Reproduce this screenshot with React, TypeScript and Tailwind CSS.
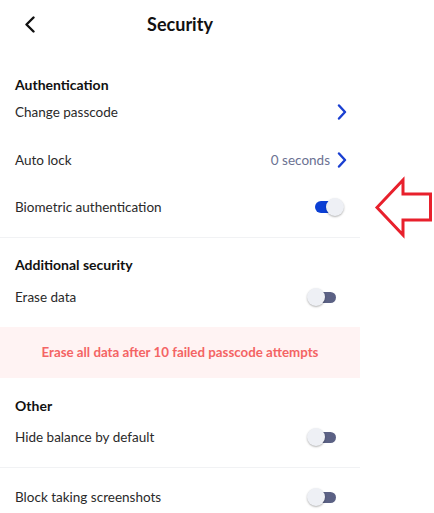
import React from 'react';

const font = { fontFamily: 'Lato, "Open Sans", sans-serif' };

const Chevron: React.FC = () => (
  <svg width="10" height="16" viewBox="0 0 10 16" fill="none">
    <path d="M2 1.5L8 8L2 14.5" stroke="#1a3fd1" strokeWidth="2.4" strokeLinecap="round" strokeLinejoin="round" />
  </svg>
);

const Toggle: React.FC<{ on?: boolean }> = ({ on }) =>
  on ? (
    <div className="relative w-[29px] h-[18px]">
      <div className="absolute left-0 top-[3px] w-[21px] h-[12px] rounded-full bg-[#0b3fd4]" />
      <div className="absolute right-0 top-0 w-[18px] h-[18px] rounded-full bg-[#eef0f5] shadow-[0_1px_2px_rgba(0,0,0,0.3)]" />
    </div>
  ) : (
    <div className="relative w-[29px] h-[18px]">
      <div className="absolute right-0 top-[4px] w-[20px] h-[11px] rounded-full bg-[#5b6184]" />
      <div className="absolute left-0 top-0 w-[18px] h-[18px] rounded-full bg-[#eef0f5] shadow-[0_1px_2px_rgba(0,0,0,0.3)]" />
    </div>
  );

const Heading: React.FC<{ children: React.ReactNode; className?: string }> = ({ children, className }) => (
  <div className={`flex items-center h-6 px-[15px] text-[14px] font-bold text-[#111] ${className ?? ''}`}>{children}</div>
);

export default function App() {
  return (
    <div className="relative w-[434px] h-[513px] bg-white overflow-hidden" style={font}>
      <div className="w-[360px]">
        {/* header */}
        <div className="relative flex items-center justify-center h-12">
          <svg className="absolute left-[24px] top-[16px]" width="12" height="17" viewBox="0 0 12 17" fill="none">
            <path d="M9.5 1.5L2.5 8.5L9.5 15.5" stroke="#111" strokeWidth="2.4" strokeLinecap="round" strokeLinejoin="round" />
          </svg>
          <div className="text-[18px] font-bold text-[#111]">Security</div>
        </div>

        {/* Authentication */}
        <div className="border-b border-[#f1f2f4]">
          <Heading className="mt-6">Authentication</Heading>
          <div className="flex items-center justify-between h-8 pl-[15px] pr-[13px] text-[13.5px] text-[#2a2a2a]">
            <span>Change passcode</span>
            <Chevron />
          </div>
          <div className="flex items-center justify-between h-16 pl-[15px] pr-[13px] text-[13.5px] text-[#2a2a2a]">
            <span>Auto lock</span>
            <div className="flex items-center gap-[7px]">
              <span className="text-[#6b7192]">0 seconds</span>
              <Chevron />
            </div>
          </div>
          <div className="flex items-center justify-between h-[30px] mb-[15px] pl-[15px] pr-[16px] text-[13.5px] text-[#2a2a2a]">
            <span>Biometric authentication</span>
            <Toggle on />
          </div>
        </div>

        {/* Additional security */}
        <Heading className="mt-[14px]">Additional security</Heading>
        <div className="flex items-center justify-between h-[42px] pl-[15px] pr-[24px] text-[13.5px] text-[#2a2a2a]">
          <span>Erase data</span>
          <Toggle />
        </div>
        <div className="flex items-center justify-center h-[51px] mt-[9px] bg-[#fff3f3] text-[13.3px] font-bold text-[#f46464]">
          Erase all data after 10 failed passcode attempts
        </div>

        {/* Other */}
        <Heading className="mt-[15px]">Other</Heading>
        <div className="flex items-center justify-between h-[40px] pb-[10px] box-content pl-[15px] pr-[24px] text-[13.5px] text-[#2a2a2a] border-b border-[#f1f2f4]">
          <span>Hide balance by default</span>
          <Toggle />
        </div>
        <div className="flex items-center justify-between h-[58px] pl-[15px] pr-[24px] text-[13.5px] text-[#2a2a2a]">
          <span>Block taking screenshots</span>
          <Toggle />
        </div>
      </div>

      {/* annotation arrow */}
      <svg className="absolute left-[372px] top-[176px]" width="62" height="64" viewBox="372 176 62 64" fill="none">
        <path d="M377 207.5L403 180V194H430.5V220H403V235Z" stroke="#e8202c" strokeWidth="3" strokeLinejoin="miter" />
      </svg>
    </div>
  );
}
